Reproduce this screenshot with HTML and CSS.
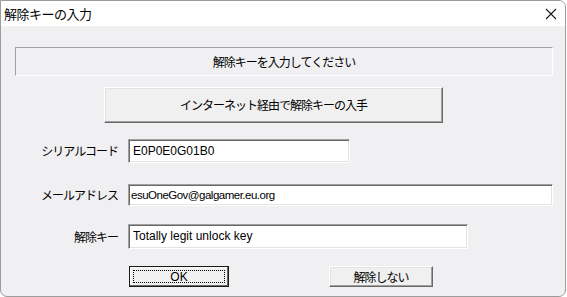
FILE: index.html
```html
<!DOCTYPE html>
<html lang="ja">
<head>
<meta charset="utf-8">
<title>解除キーの入力</title>
<link rel="stylesheet" href="styles.css">
</head>
<body>
<div class="win">
  <div class="titlebar">
    <span class="title">解除キーの入力</span>
    <svg class="close" width="12" height="12" viewBox="0 0 12 12"><path d="M1 1 L11 11 M11 1 L1 11" stroke="#1a1a1a" stroke-width="1.1" fill="none"/></svg>
  </div>
  <div class="body">
    <div class="status">解除キーを入力してください</div>
    <div class="netrow"><div class="btn net">インターネット経由で解除キーの入手</div></div>
    <div class="field f-serial"><span class="lbl">シリアルコード</span><div class="edit e-serial">E0P0E0G01B0</div></div>
    <div class="field f-mail"><span class="lbl">メールアドレス</span><div class="edit e-mail">esuOneGov@galgamer.eu.org</div></div>
    <div class="field f-key"><span class="lbl">解除キー</span><div class="edit e-key">Totally legit unlock key</div></div>
    <div class="actions">
      <div class="btn ok"><span class="focus">OK</span></div>
      <div class="btn cancel">解除しない</div>
    </div>
  </div>
</div>
</body>
</html>
```

FILE: styles.css
```css
* { box-sizing: border-box; }
html, body { margin: 0; padding: 0; background: #ffffff; }
body {
  font-family: "Noto Sans CJK JP", "Liberation Sans", sans-serif;
  font-size: 12px;
  color: #000;
}
.win {
  width: 566px;
  height: 297px;
  border: 1px solid #9c9c9c;
  border-radius: 0 7px 7px 7px;
  overflow: hidden;
  display: flex;
  flex-direction: column;
  background: #f0eff1;
}
.titlebar {
  height: 25px;
  background: #ffffff;
  display: flex;
  align-items: center;
  justify-content: space-between;
  padding: 0 8px 0 3px;
  flex: none;
}
.title {
  font-size: 13px;
  letter-spacing: -0.5px;
  line-height: 16px;
}
.close { display: block; margin-top: 1px; }
.body {
  flex: 1;
  padding: 21px 0 0 14px;
  display: flex;
  flex-direction: column;
  align-items: flex-start;
  letter-spacing: -1px;
}
.status {
  width: 538px;
  height: 29px;
  border-top: 1px solid #a0a0a0;
  border-left: 1px solid #a0a0a0;
  border-right: 1px solid #ffffff;
  border-bottom: 1px solid #ffffff;
  display: flex;
  align-items: center;
  justify-content: center;
  line-height: 14px;
  padding-top: 1px;
}
.btn {
  background: #f0f0f0;
  border-top: 1px solid #ffffff;
  border-left: 1px solid #ffffff;
  border-right: 1px solid #696969;
  border-bottom: 1px solid #696969;
  box-shadow: inset -1px -1px 0 #a0a0a0, inset 1px 1px 0 #e3e3e3;
  display: flex;
  align-items: center;
  justify-content: center;
  line-height: 14px;
}
.netrow { margin-top: 11px; margin-left: 89px; }
.net { width: 339px; height: 36px; }
.field {
  display: flex;
  align-items: center;
}
.lbl {
  width: 103px;
  margin-right: 10px;
  text-align: right;
  line-height: 14px;
}
.edit {
  background: #ffffff;
  border-top: 1px solid #a0a0a0;
  border-left: 1px solid #a0a0a0;
  border-right: 1px solid #ffffff;
  border-bottom: 1px solid #ffffff;
  box-shadow: inset 1px 1px 0 #696969, inset -1px -1px 0 #e3e3e3;
  font-family: "Liberation Sans", "Noto Sans CJK JP", sans-serif;
  font-size: 12px;
  letter-spacing: 0;
  line-height: 14px;
  padding: 3px 3px 0 4px;
  white-space: nowrap;
}
.f-serial { margin-top: 16px; }
.e-serial { width: 222px; height: 24px; padding-top: 4px; }
.f-mail { margin-top: 21px; }
.e-mail { width: 425px; height: 22px; padding-left: 2px; font-size: 11.5px; letter-spacing: -0.5px; }
.f-key { margin-top: 18px; }
.e-key { width: 340px; height: 25px; padding-top: 4px; }
.actions {
  margin-top: 17px;
  margin-left: 114px;
  display: flex;
  gap: 100px;
}
.ok {
  width: 100px;
  height: 21px;
  border: 1px solid #1a1a1a;
  box-shadow: inset -1px -1px 0 #696969, inset 1px 1px 0 #ffffff;
  padding: 3px;
}
.focus {
  flex: 1;
  align-self: stretch;
  border: 1px dotted #000;
  display: flex;
  align-items: center;
  justify-content: center;
  font-family: "Liberation Sans", sans-serif;
  letter-spacing: 0;
}
.cancel { width: 104px; height: 21px; }
```
